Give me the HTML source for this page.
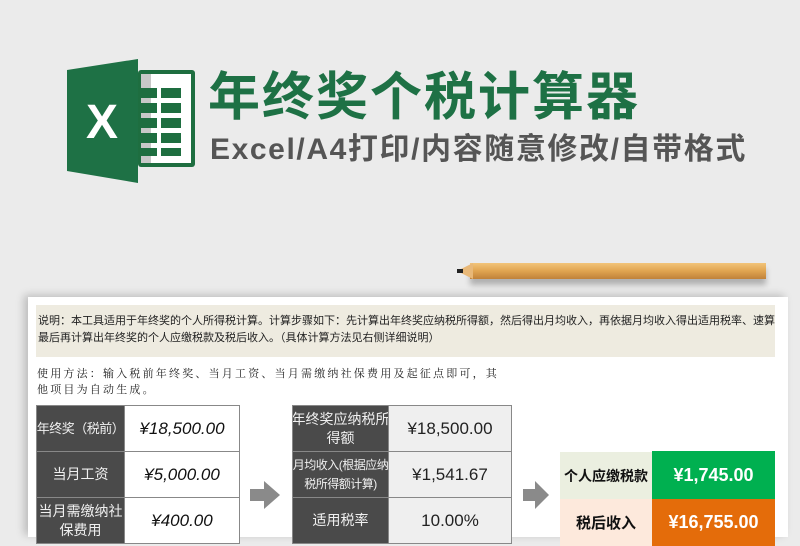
<!DOCTYPE html>
<html><head><meta charset="utf-8"><style>
body{margin:0;width:800px;height:526px;overflow:hidden;background:#ebebeb;font-family:"Liberation Sans","Noto Sans CJK SC",sans-serif;position:relative}
.a{position:absolute}
.t{position:absolute;display:flex;align-items:center;justify-content:center;text-align:center;box-sizing:border-box;border:1px solid #888;white-space:nowrap;overflow:hidden}
.d{background:#4a4a4a;color:#f0f0f0;font-size:14px;line-height:19px}
.w{background:#fff;color:#111;font-style:italic;font-size:17px}
.g{background:#efefef;color:#222;font-size:17px}
</style></head><body>
<svg class="a" style="left:60px;top:55px" width="140" height="130" viewBox="60 55 140 130">
<rect x="138" y="70" width="57" height="97" rx="3" fill="#1e6e40"/>
<rect x="141" y="74" width="50" height="89" fill="#fff"/>
<rect x="141" y="74" width="10" height="89" fill="#c8c8c8"/>
<g fill="#1e6e40">
<rect x="140" y="88" width="17" height="10"/><rect x="161" y="88" width="20" height="10"/>
<rect x="140" y="103" width="17" height="10"/><rect x="161" y="103" width="20" height="10"/>
<rect x="140" y="118" width="17" height="10"/><rect x="161" y="118" width="20" height="10"/>
<rect x="140" y="133" width="17" height="10"/><rect x="161" y="133" width="20" height="10"/>
<rect x="140" y="148" width="17" height="8"/><rect x="161" y="148" width="20" height="8"/>
</g>
<polygon points="67,70 138,59 138,183 67,171" fill="#1e7145"/>
<text x="102" y="138" font-family="Liberation Sans" font-weight="bold" font-size="48" fill="#fff" text-anchor="middle">X</text>
</svg>
<div class="a" style="left:208px;top:68px;font-size:52px;font-weight:bold;color:#1e7145;letter-spacing:2px;line-height:60px">年终奖个税计算器</div>
<div class="a" style="left:210px;top:132px;font-size:30px;font-weight:bold;color:#555;line-height:36px;letter-spacing:1.6px">Excel/A4打印/内容随意修改/自带格式</div>
<div class="a" style="left:470px;top:263px;width:296px;height:16px;background:linear-gradient(#f2c47a,#e0a450 50%,#c0823a);box-shadow:0 6px 6px rgba(0,0,0,.25)"></div>
<div class="a" style="left:457px;top:263px;width:0;height:0;border-top:8px solid transparent;border-bottom:8px solid transparent;border-right:16px solid #e8b878"></div>
<div class="a" style="left:457px;top:269px;width:6px;height:4px;background:#222"></div>
<div class="a" style="left:28px;top:297px;width:760px;height:240px;background:#fff;box-shadow:-4px -2px 8px rgba(0,0,0,.2)"></div>
<div class="a" style="left:36px;top:305px;width:739px;height:52px;background:#eeebe0;font-size:11px;line-height:17px;color:#222;padding:8px 0 0 2px;box-sizing:border-box;white-space:nowrap;overflow:hidden">说明：本工具适用于年终奖的个人所得税计算。计算步骤如下：先计算出年终奖应纳税所得额，然后得出月均收入，再依据月均收入得出适用税率、速算<br>最后再计算出年终奖的个人应缴税款及税后收入。（具体计算方法见右侧详细说明）</div>
<div class="a" style="left:37px;top:366px;font-size:11px;line-height:16px;color:#222;font-family:'Liberation Serif','Noto Serif CJK SC',serif;letter-spacing:2.2px">使用方法：输入税前年终奖、当月工资、当月需缴纳社保费用及起征点即可，其<br>他项目为自动生成。</div>
<div class="t d" style="left:36px;top:405px;width:89px;height:47px;font-size:13px;letter-spacing:-0.5px">年终奖（税前）</div>
<div class="t w" style="left:124px;top:405px;width:116px;height:47px">¥18,500.00</div>
<div class="t d" style="left:36px;top:451px;width:89px;height:47px">当月工资</div>
<div class="t w" style="left:124px;top:451px;width:116px;height:47px">¥5,000.00</div>
<div class="t d" style="left:36px;top:497px;width:89px;height:47px">当月需缴纳社<br>保费用</div>
<div class="t w" style="left:124px;top:497px;width:116px;height:47px">¥400.00</div>
<svg class="a" style="left:250px;top:481px" width="30" height="28"><polygon points="0,8 14,8 14,0 30,14 14,28 14,20 0,20" fill="#8a8a8a"/></svg>
<div class="t d" style="left:292px;top:405px;width:97px;height:47px">年终奖应纳税所<br>得额</div>
<div class="t g" style="left:388px;top:405px;width:124px;height:47px">¥18,500.00</div>
<div class="t d" style="left:292px;top:451px;width:97px;height:47px;font-size:12px;letter-spacing:-0.5px">月均收入(根据应纳<br>税所得额计算)</div>
<div class="t g" style="left:388px;top:451px;width:124px;height:47px">¥1,541.67</div>
<div class="t d" style="left:292px;top:497px;width:97px;height:47px">适用税率</div>
<div class="t g" style="left:388px;top:497px;width:124px;height:47px">10.00%</div>
<svg class="a" style="left:523px;top:481px" width="26" height="28"><polygon points="0,8 12,8 12,0 26,14 12,28 12,20 0,20" fill="#8a8a8a"/></svg>
<div class="t" style="left:560px;top:452px;width:92px;height:47px;border:none;background:#ebefe0;font-weight:bold;font-size:14px;color:#111">个人应缴税款</div>
<div class="t" style="left:652px;top:451px;width:123px;height:48px;border:none;background:#00b050;color:#fff;font-weight:bold;font-size:18px">¥1,745.00</div>
<div class="t" style="left:560px;top:499px;width:92px;height:47px;border:none;background:#fde9dc;font-weight:bold;font-size:15px;color:#111">税后收入</div>
<div class="t" style="left:652px;top:499px;width:123px;height:47px;border:none;background:#e46c0a;color:#fff;font-weight:bold;font-size:18px">¥16,755.00</div>
</body></html>
